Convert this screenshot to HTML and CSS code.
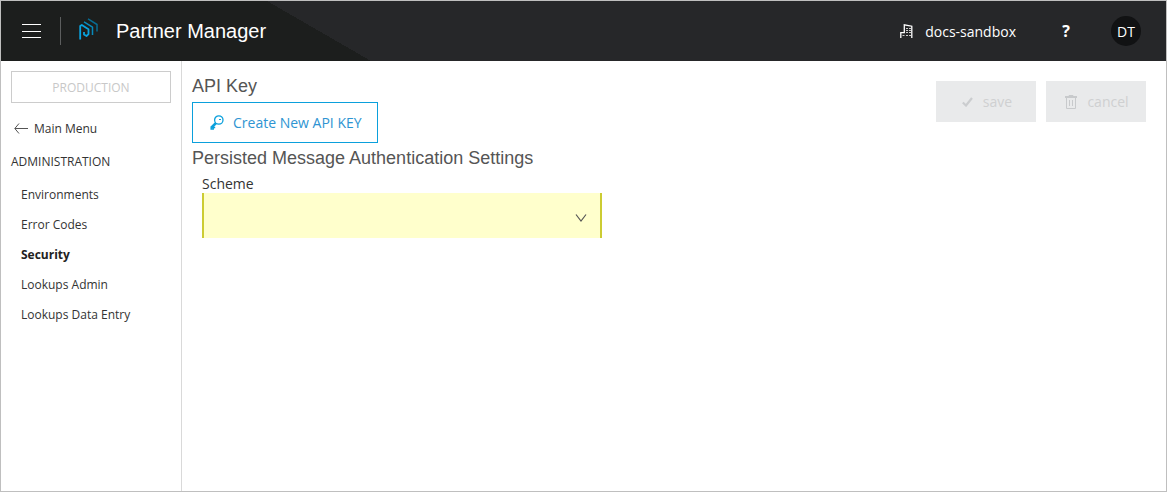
FILE: index.html
```html
<!DOCTYPE html>
<html lang="en">
<head>
<meta charset="utf-8">
<meta name="viewport" content="width=device-width, initial-scale=1">
<title>Partner Manager</title>
<link rel="stylesheet" href="styles.css">
</head>
<body>
<div class="app">
  <header class="topbar">
    <button class="menu-button" type="button" aria-label="Menu">
      <svg width="20" height="16" viewBox="0 0 20 16" fill="none" stroke="#fff"><path d="M0 1.500h19M0 8.500h19M0 14.500h19"/></svg>
    </button>
    <span class="divider"></span>
    <svg class="logo" width="20" height="22" viewBox="0 0 20 22" fill="none" stroke-linejoin="round">
      <path stroke="#09a3e0" stroke-width="1.800" d="M1.200 21.500V8L2.800 7l6.700 4.200v5L7.500 18 5 16.500V14"/>
      <path stroke="#078abc" stroke-width="1.500" d="M5 3.800l8.500 5.400V17"/>
      <path stroke="#086b91" stroke-width="1.500" d="M9 .8l9 5.700v7"/>
    </svg>
    <h1 class="title">Partner Manager</h1>
    <button class="tenant" type="button">
      <svg width="13" height="14" viewBox="0 0 13 14" fill="none" stroke="#fff"><path stroke-width="1.300" d="M.8 14V8.700h3.500V.8l7.500 1.400V14"/><path stroke="#ccc" d="M6 4.500h2m1 0h2M6 6.500h2m1 0h2M6 8.500h2m1 0h2M2.500 11.500h2M6 11.500h2m1 0h2"/></svg>
      <span>docs-sandbox</span>
    </button>
    <button class="help" type="button">?</button>
    <button class="avatar" type="button">DT</button>
  </header>
  <div class="body">
    <nav class="sidebar">
      <button class="environment" type="button" disabled>PRODUCTION</button>
      <a class="back" href="#">
        <svg width="14" height="12" viewBox="0 0 14 12" fill="none" stroke="#555"><path d="M14 5.500H1M5 .5L.8 5.500 5 10.500"/></svg>
        <span>Main Menu</span>
      </a>
      <h2 class="group">ADMINISTRATION</h2>
      <ul class="links">
        <li><a href="#">Environments</a></li>
        <li><a href="#">Error Codes</a></li>
        <li><a class="current" href="#" aria-current="page">Security</a></li>
        <li><a href="#">Lookups Admin</a></li>
        <li><a href="#">Lookups Data Entry</a></li>
      </ul>
    </nav>
    <main class="content">
      <section class="settings">
        <h2 class="heading">API Key</h2>
        <button class="create" type="button">
          <svg width="14" height="15" viewBox="0 0 14 15" fill="none" stroke="#0ba0dc"><circle cx="8.800" cy="5" r="4.200" stroke-width="1.300"/><path stroke-width="2.500" d="M6 8L1.500 12.500"/><path stroke-width="1.500" d="M1.200 11.500V14h2v-1.500h2"/><path d="M9 4.500h2"/></svg>
          <span>Create New API KEY</span>
        </button>
        <h2 class="heading">Persisted Message Authentication Settings</h2>
        <div class="field">
          <label for="scheme">Scheme</label>
          <div class="select-wrap">
            <select id="scheme" required><option value=""></option></select>
            <svg class="chevron" width="12" height="8" viewBox="0 0 12 8" fill="none" stroke="#555" stroke-width="1.200"><path d="M1 .5L6 7l5-6.500"/></svg>
          </div>
        </div>
      </section>
      <div class="actions">
        <button type="button" disabled>
          <svg width="11" height="10" viewBox="0 0 11 10" fill="none" stroke="#cbcdcf" stroke-width="2.200"><path d="M.8 5.500L4 8.500 10 1"/></svg>
          <span>save</span>
        </button>
        <button type="button" disabled>
          <svg width="12" height="14" viewBox="0 0 12 14" fill="none" stroke="#c8cacc"><path d="M0 2.500h12M0 1.500h12M4 1V.5h4V1M1.500 3v10.500h9V3M4.500 5v6M7.500 5v6"/></svg>
          <span>cancel</span>
        </button>
      </div>
    </main>
  </div>
</div>
</body>
</html>
```
FILE: styles.css
```css
* {
  box-sizing: border-box;
}

body {
  margin: 0;
  font-family: "Open Sans", "Noto Sans", sans-serif;
  font-size: 14px;
  color: #333;
  background: #fff;
}

button {
  display: flex;
  align-items: center;
  justify-content: center;
  padding: 0;
  border: 0;
  background: none;
  color: inherit;
  font: inherit;
}

svg {
  flex: none;
}

h1,
h2,
ul {
  margin: 0;
  padding: 0;
  font-weight: 400;
}

a {
  color: inherit;
  text-decoration: none;
}

.app {
  display: flex;
  flex-direction: column;
  min-height: 100vh;
  border: 1px solid #bfbfbf;
}

.topbar {
  display: flex;
  align-items: center;
  height: 60px;
  padding: 0 25px 0 21px;
  color: #fff;
  background: #262729;
  background-image: linear-gradient(to top right, #1c1e1d 50%, transparent 50%), linear-gradient(#1c1e1d, #1c1e1d);
  background-position: 266px 0, 0 0;
  background-size: 104px 60px, 266px 60px;
  background-repeat: no-repeat;
}

.divider {
  width: 1px;
  height: 28px;
  margin: 0 18px;
  background: #5c5e5e;
}

.logo {
  margin-bottom: 4px;
}

.title {
  margin: 0 auto 0 17px;
  font-family: "Liberation Sans", Arial, sans-serif;
  font-size: 20px;
  line-height: 24px;
}

.tenant {
  gap: 12px;
}

.help {
  width: 20px;
  margin: 0 35px 0 40px;
  font-size: 16px;
  font-weight: 700;
}

.avatar {
  width: 30px;
  height: 30px;
  border-radius: 50%;
  background: #111213;
}

.body {
  display: flex;
  flex: 1;
}

.sidebar {
  flex: none;
  width: 181px;
  padding: 10px;
  border-right: 1px solid #d9d9d9;
  font-size: 12px;
  line-height: 16px;
}

.environment {
  width: 100%;
  height: 32px;
  padding-top: 1px;
  border: 1px solid #ccc;
  color: #c8c8c8;
}

.back {
  display: flex;
  align-items: center;
  gap: 6px;
  margin: 18px 0 17px 3px;
}

.group {
  font-size: 12px;
}

.links {
  display: grid;
  gap: 14px;
  margin: 17px 0 0 10px;
  list-style: none;
}

.links a {
  display: block;
}

.current {
  font-weight: 700;
  color: #222;
}

.content {
  display: flex;
  flex: 1;
  justify-content: space-between;
  align-items: flex-start;
  padding: 15px 20px 15px 10px;
}

.heading {
  font-family: "Liberation Sans", Arial, sans-serif;
  font-size: 18px;
  line-height: 20px;
  color: #555;
}

.create {
  gap: 9px;
  height: 41px;
  margin: 6px 0 5px;
  padding: 0 15px 0 17px;
  border: 1px solid #0ba0dc;
  color: #2e94d2;
}

.field {
  width: 400px;
  max-width: 100%;
  margin: 7px 0 0 10px;
}

.field label {
  display: block;
  line-height: 18px;
}

.select-wrap {
  position: relative;
}

.select-wrap select {
  display: block;
  width: 100%;
  height: 45px;
  padding: 0 36px 0 12px;
  appearance: none;
  border: solid #cc3;
  border-width: 0 2px;
  border-radius: 0;
  background: #ffc;
  color: inherit;
  font: inherit;
}

.chevron {
  position: absolute;
  top: 21px;
  right: 15px;
  pointer-events: none;
}

.actions {
  display: flex;
  gap: 10px;
  margin-top: 5px;
}

.actions button {
  gap: 10px;
  width: 100px;
  height: 41px;
  padding-left: 2px;
  background: #e9eaeb;
  color: #cfd0d1;
}
```
